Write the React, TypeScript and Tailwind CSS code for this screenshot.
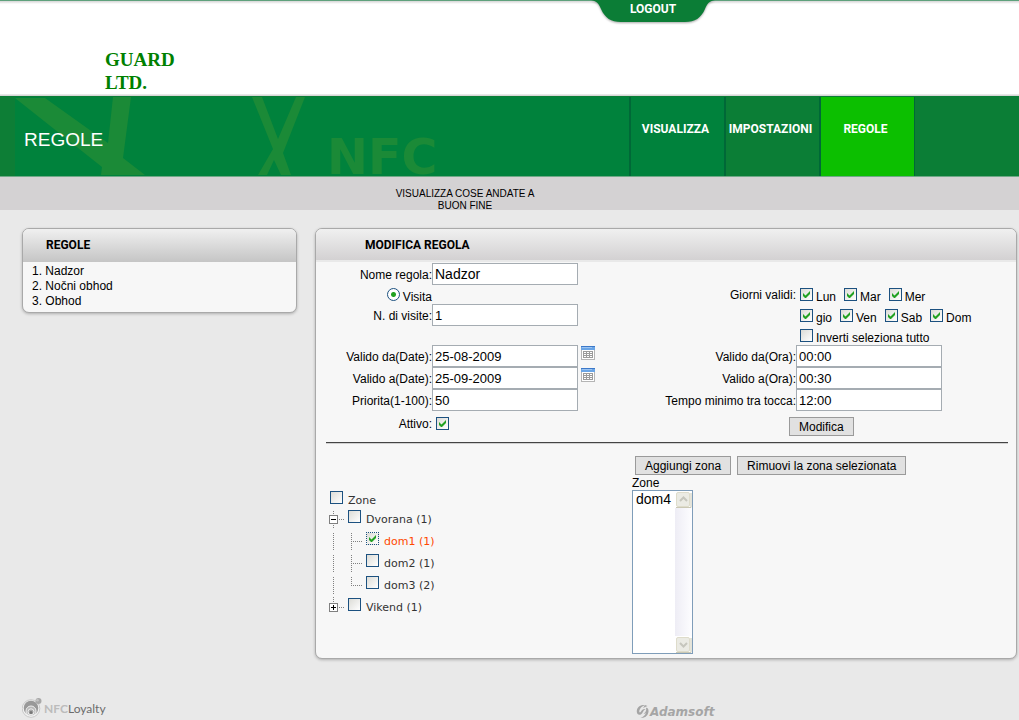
import React from "react";

function Check({ id, checked = false, focus = false }: { id: string; checked?: boolean; focus?: boolean }) {
  return (
    <span className="relative block h-[13px] w-[13px] shrink-0">
      <input
        id={id}
        type="checkbox"
        defaultChecked={checked}
        className={
          "peer block h-[13px] w-[13px] appearance-none border border-[#1c5180] bg-linear-to-br from-[#dcdcd7] to-white " +
          (focus ? "border-dotted" : "border-solid")
        }
      />
      <svg viewBox="0 0 13 13" className="pointer-events-none absolute inset-0 hidden h-[13px] w-[13px] peer-checked:block">
        <path d="M3 5v3l2 2h1l4-4V3L5.500 7.500z" fill="#21a121" />
      </svg>
    </span>
  );
}

function Day({ name, checked = true }: { name: string; checked?: boolean }) {
  const id = "day-" + name.split(" ")[0].toLowerCase();
  return (
    <span className="flex gap-[3px]">
      <Check id={id} checked={checked} />
      <label htmlFor={id} className="pt-[2px] leading-[14px]">{name}</label>
    </span>
  );
}

function FieldLabel({ id, text, right = false }: { id: string; text: string; right?: boolean }) {
  return (
    <label htmlFor={id} className={(right ? "col-start-3" : "col-start-1") + " text-right leading-[24px]"}>
      {text}
    </label>
  );
}

function TextField({ id, value, large = false }: { id: string; value: string; large?: boolean }) {
  return (
    <input
      id={id}
      type="text"
      defaultValue={value}
      className={"h-[22px] w-[146px] border border-[#a5acb2] bg-white px-[2px] " + (large ? "text-[14px]" : "text-[13px]")}
    />
  );
}

function Calendar({ label }: { label: string }) {
  return (
    <button type="button" aria-label={label} className="mt-px h-[14px] w-[14px]">
      <svg viewBox="0 0 14 14" className="block h-[14px] w-[14px]">
        <rect x="0.5" y="0.5" width="13" height="13" fill="#fff" stroke="#b5b5b5" />
        <rect width="14" height="4" fill="#6aa5e6" />
        <rect width="14" height="1" fill="#3c78c8" />
        <rect x="1" y="1" width="10" height="1" fill="#9cc4f2" />
        <rect x="2" y="5" width="10" height="7" fill="#9b9b9b" />
        <path d="M3 6h2v1H3zM6 6h2v1H6zM9 6h2v1H9zM3 8h2v1H3zM6 8h2v1H6zM9 8h2v1H9zM3 10h2v1H3zM6 10h2v1H6zM9 10h2v1H9z" fill="#fff" />
      </svg>
    </button>
  );
}

function PushButton({ text, type = "button" }: { text: string; type?: "button" | "submit" }) {
  return (
    <button type={type} className="h-[19px] border border-[#9a9a9a] bg-[#e1e1e1] px-[9px] pt-[2px] leading-[15px]">
      {text}
    </button>
  );
}

type Branch = "minus" | "plus" | "line" | "tee" | "corner";

function BranchIcon({ kind }: { kind: Branch }) {
  const boxed = kind === "minus" || kind === "plus";
  return (
    <svg viewBox="0 0 18 22" className="block h-[22px] w-[18px] shrink-0" shapeRendering="crispEdges">
      <g stroke="#808080" strokeDasharray="1 1" fill="none">
        {kind === "minus" && <path d="M4.500 3v18M10 11.500h6" />}
        {kind === "plus" && <path d="M4.500 1v6M10 11.500h6" />}
        {kind === "line" && <path d="M4.500 3v18" />}
        {kind === "tee" && <path d="M4.500 3v18M4 11.500h12" />}
        {kind === "corner" && <path d="M4.500 3v9M4 11.500h12" />}
      </g>
      {boxed && <rect x="0.5" y="7.500" width="8" height="8" fill="#fff" stroke="#808080" />}
      {boxed && <path d={kind === "minus" ? "M2 11.500h5" : "M2 11.500h5M4.500 9v5"} stroke="#000" />}
    </svg>
  );
}

function TreeRow({ id, text, icons, checked = false }: { id: string; text: string; icons: Branch[]; checked?: boolean }) {
  return (
    <li className="flex h-[22px]">
      {icons.map((kind, i) => (
        <BranchIcon key={i} kind={kind} />
      ))}
      <span className="ml-px pt-[2px]">
        <Check id={id} checked={checked} focus={checked} />
      </span>
      <label htmlFor={id} className={"pl-[5px] leading-[24px] " + (checked ? "text-[#ff4800]" : "")}>
        {text}
      </label>
    </li>
  );
}

const panel = "rounded-[7px] border border-[#a9a9a9] bg-[#f7f7f7] shadow-[0_1px_3px_rgba(0,0,0,0.25)]";
const heading = "rounded-t-[6px] bg-linear-to-b pt-[2px] font-['Roboto',sans-serif] text-[12px] font-bold leading-[29px]";
const tab = "block h-full w-[95px] border-l-2 border-[#006837] pr-[4px] pt-[24px] text-center leading-[16px]";

export default function App() {
  return (
    <div className="min-h-screen bg-[#e9e9e9] font-['Liberation_Sans',Arial,sans-serif] text-[12px] text-black">
      <header>
        <div className="border-t border-[#5fa17c] bg-white">
          <div className="relative h-[3px] bg-linear-to-b from-[#d5d5d5] to-white">
            <a
              href="#logout"
              className="absolute -top-px right-[304px] block h-[28px] w-[124px] font-['Roboto',sans-serif] text-[12px] font-bold text-white"
            >
              <svg viewBox="0 0 124 28" className="absolute inset-0 h-[28px] w-[124px] drop-shadow-[0_1px_1px_rgba(0,0,0,0.35)]">
                <path d="M0 0C6 1 8 4 10 9C14 18 20 22 30 22H94C104 22 110 18 114 9C116 4 118 1 124 0Z" fill="#0b7d36" />
              </svg>
              <span className="relative block text-center leading-[18px]">LOGOUT</span>
            </a>
          </div>
          <div className="mt-[44px] w-[180px] pl-[105px] font-['Liberation_Serif',serif] text-[19px] font-bold leading-[23px] text-[#008000]">
            GUARD LTD.
          </div>
          <div className="h-[2px] bg-linear-to-b from-[#f0f0f0] to-[#cfcfcf]" />
        </div>

        <div className="flex h-[81px] border-b border-t border-b-[#6fa987] border-t-[#0b7d36] bg-[#0b7e36]">
          <div className="relative flex flex-1 items-center border-l-[15px] border-[#0d7e36] bg-[#00823c]">
            <svg viewBox="15 97 430 79" className="absolute left-0 top-0 h-[79px] w-[430px]" fill="#1b8a37">
              <path d="M15 98H45L108 143L113 97H131L123 158L145 175H101L102 167Z" />
              <path d="M252 97H262L278 139L296 97H305L283 153L291 175H281L274 160L267 175H258L273 149Z" />
            </svg>
            <span
              aria-hidden="true"
              className="absolute left-[312px] top-[41px] font-['DejaVu_Sans',sans-serif] text-[49px] font-bold leading-[40px] text-[#1b8a37]"
            >
              NFC
            </span>
            <h1 className="relative pl-[9px] pt-[6px] text-[19px] leading-[24px] text-white">REGOLE</h1>
          </div>
          <nav className="flex font-['Roboto',sans-serif] text-[12px] font-bold text-white">
            <a href="#visualizza" className={tab + " bg-[#00823c]"}>VISUALIZZA</a>
            <a href="#impostazioni" className={tab + " bg-[#0b7e36]"}>IMPOSTAZIONI</a>
            <a href="#regole" className={tab + " bg-[#0cbf00]"}>REGOLE</a>
          </nav>
          <div className="w-[105px] border-l border-[#006837]" />
        </div>

        <div className="h-[33px] bg-[#d4d2d3] pl-[390px] pt-[11px]">
          <a href="#riuscite" className="block w-[150px] text-center text-[10px] leading-[12px]">
            VISUALIZZA COSE ANDATE A BUON FINE
          </a>
        </div>
      </header>

      <div className="flex items-start gap-[18px] pl-[22px] pr-[2px] pt-[18px]">
        <aside className={panel + " w-[275px] pb-[3px]"}>
          <h2 className={heading + " from-[#f0f0f0] to-[#c5c5c5] pb-[2px] pl-[23px]"}>REGOLE</h2>
          <ol className="pl-[9px] pt-[2px] leading-[15px]">
            <li><a href="#nadzor">1. Nadzor</a></li>
            <li><a href="#nocni-obhod">2. Nočni obhod</a></li>
            <li><a href="#obhod">3. Obhod</a></li>
          </ol>
        </aside>

        <main className={panel + " flex-1 pb-[4px]"}>
          <h2 className={heading + " border-b-2 border-[#e9e9e9] from-[#f0f0f0] to-[#d3d1d2] pl-[49px]"}>MODIFICA REGOLA</h2>

          <form className="grid grid-cols-[116px_minmax(184px,1fr)_180px_220px] grid-rows-[22px_19px_22px_19px_22px_22px_22px_30px] pt-px">
            <FieldLabel id="nome" text="Nome regola:" />
            <TextField id="nome" value="Nadzor" large />

            <div className="col-start-1 row-start-2 flex justify-end gap-[3px] pt-[3px]">
              <input
                id="visita"
                type="radio"
                defaultChecked
                className="block h-[13px] w-[13px] appearance-none rounded-full border border-[#1c5180] bg-white bg-[radial-gradient(circle,#21a121_0_2px,#fff_3px)]"
              />
              <label htmlFor="visita" className="pt-[2px] leading-[14px]">Visita</label>
            </div>
            <div className="col-start-3 row-start-2 text-right leading-[20px]">Giorni validi:</div>
            <div className="col-start-4 row-start-2 flex gap-[8px] pl-[4px] pt-[3px]">
              <Day name="Lun" />
              <Day name="Mar" />
              <Day name="Mer" />
            </div>

            <FieldLabel id="visite" text="N. di visite:" />
            <TextField id="visite" value="1" />
            <div className="col-start-4 flex gap-[8px] pl-[4px] pt-[5px]">
              <Day name="gio" />
              <Day name="Ven" />
              <Day name="Sab" />
              <Day name="Dom" />
            </div>

            <div className="col-start-4 pl-[4px] pt-[3px]">
              <Day name="Inverti seleziona tutto" checked={false} />
            </div>

            <FieldLabel id="da-data" text="Valido da(Date):" />
            <div className="flex gap-[3px]">
              <TextField id="da-data" value="25-08-2009" />
              <Calendar label="Scegli la data di inizio" />
            </div>
            <FieldLabel id="da-ora" text="Valido da(Ora):" right />
            <TextField id="da-ora" value="00:00" />

            <FieldLabel id="a-data" text="Valido a(Date):" />
            <div className="flex gap-[3px]">
              <TextField id="a-data" value="25-09-2009" />
              <Calendar label="Scegli la data di fine" />
            </div>
            <FieldLabel id="a-ora" text="Valido a(Ora):" right />
            <TextField id="a-ora" value="00:30" />

            <FieldLabel id="priorita" text="Priorita(1-100):" />
            <TextField id="priorita" value="50" />
            <FieldLabel id="tempo" text="Tempo minimo tra tocca:" right />
            <TextField id="tempo" value="12:00" />

            <label htmlFor="attivo" className="col-start-1 text-right leading-[26px]">Attivo:</label>
            <div className="pl-[4px] pt-[6px]">
              <Check id="attivo" checked />
            </div>
            <div className="col-span-2 pl-[173px] pt-[6px]">
              <PushButton text="Modifica" type="submit" />
            </div>
          </form>

          <hr className="ml-[10px] mr-[8px] mt-px h-[2px] border-b border-t border-b-[#d0d0d0] border-t-[#444]" />

          <div className="flex">
            <ul className="w-[316px] pl-[13px] pt-[45px] font-['DejaVu_Sans',sans-serif] text-[11px] text-[#333]">
              <li className="flex h-[19px]">
                <span className="ml-px pt-[2px]">
                  <Check id="z-all" />
                </span>
                <label htmlFor="z-all" className="pl-[5px] leading-[24px]">Zone</label>
              </li>
              <TreeRow id="z-dvorana" text="Dvorana (1)" icons={["minus"]} />
              <TreeRow id="z-dom1" text="dom1 (1)" icons={["line", "tee"]} checked />
              <TreeRow id="z-dom2" text="dom2 (1)" icons={["line", "tee"]} />
              <TreeRow id="z-dom3" text="dom3 (2)" icons={["line", "corner"]} />
              <TreeRow id="z-vikend" text="Vikend (1)" icons={["plus"]} />
            </ul>

            <div className="pt-[12px]">
              <div className="flex gap-[6px] pl-[3px]">
                <PushButton text="Aggiungi zona" />
                <PushButton text="Rimuovi la zona selezionata" />
              </div>
              <label htmlFor="zone" className="block pt-px leading-[14px]">Zone</label>
              <div className="flex h-[164px] w-[61px] border border-[#7f9db9] bg-white">
                <select
                  id="zone"
                  multiple
                  className="h-full w-[42px] appearance-none overflow-hidden border-0 bg-white p-0 text-[14px] outline-none"
                >
                  <option className="p-0 pl-[3px] leading-[20px]">dom4</option>
                </select>
                <div className="flex w-[17px] flex-col justify-between bg-linear-to-r from-[#eeedf5] to-[#fdfdff]">
                  {["M5 10l3.500-3.500L12 10", "M5 7l3.500 3.500L12 7"].map((d) => (
                    <svg key={d} viewBox="0 0 17 17" className="block h-[17px] w-[17px]">
                      <rect width="17" height="17" fill="#fff" />
                      <rect x="1.500" y="1.500" width="13" height="14" rx="1.500" fill="#ebebe4" stroke="#dedccb" />
                      <path d="M1 16.500h15V2" fill="none" stroke="#cac8b4" />
                      <path d={d} fill="none" stroke="#c6c6bd" strokeWidth="2" />
                    </svg>
                  ))}
                </div>
              </div>
            </div>
          </div>
        </main>
      </div>

      <footer className="flex pl-[22px] pt-[38px]">
        <a href="#nfcloyalty" className="flex h-[22px] w-[614px] gap-[2px]">
          <svg viewBox="0 0 20 22" className="h-[22px] w-[20px]">
            <circle cx="9" cy="11.500" r="8.800" fill="#f2f2f2" stroke="#c8c8c8" strokeWidth="1" />
            <circle cx="9" cy="11" r="7.300" fill="#999" />
            <circle cx="16.500" cy="4" r="3" fill="#a8a8a8" />
            <circle cx="15.500" cy="3.200" r="1.300" fill="#c4c4c4" />
            <circle cx="9" cy="14" r="5" fill="#b8b8b8" stroke="#f0f0f0" />
            <circle cx="9" cy="14.800" r="3" fill="#aaa" stroke="#f0f0f0" />
            <circle cx="9" cy="15.500" r="1.500" fill="#777" />
          </svg>
          <span className="font-['Lato',sans-serif] text-[12px] leading-[24px] text-[#6c6c6c]">
            <span className="font-bold text-[#bcbcbc]">NFC</span>Loyalty
          </span>
        </a>
        <a href="#adamsoft" className="flex items-start gap-px pt-[8px]">
          <svg viewBox="0 0 13 13" className="h-[13px] w-[13px]" fill="#a5a5a5">
            <path d="M9 0C4 -0.500 1 2.500 0.800 6C0.600 8.500 2 10 4 9.700C7 9.200 6.500 5.500 9.500 4.200C7 3.800 6 5 5 6.500C4 8 3 7.500 3.300 5.800C3.700 3.500 5.500 1.500 9 0Z" />
            <path d="M4.500 12.700C9.500 13.300 12.200 10 12.500 6.500C12.700 4 11.500 2.600 9.800 2.800C11 5 9.500 7.500 7.500 8.600C8.500 9 9.200 8.500 10 7.500C9.500 10 7.500 12 4.500 12.700Z" />
            <path d="M9 0L11.500 1L7 3Z" />
          </svg>
          <span className="font-['DejaVu_Sans',sans-serif] text-[12px] font-bold italic leading-[14px] text-[#a5a5a5]">Adamsoft</span>
        </a>
      </footer>
    </div>
  );
}
